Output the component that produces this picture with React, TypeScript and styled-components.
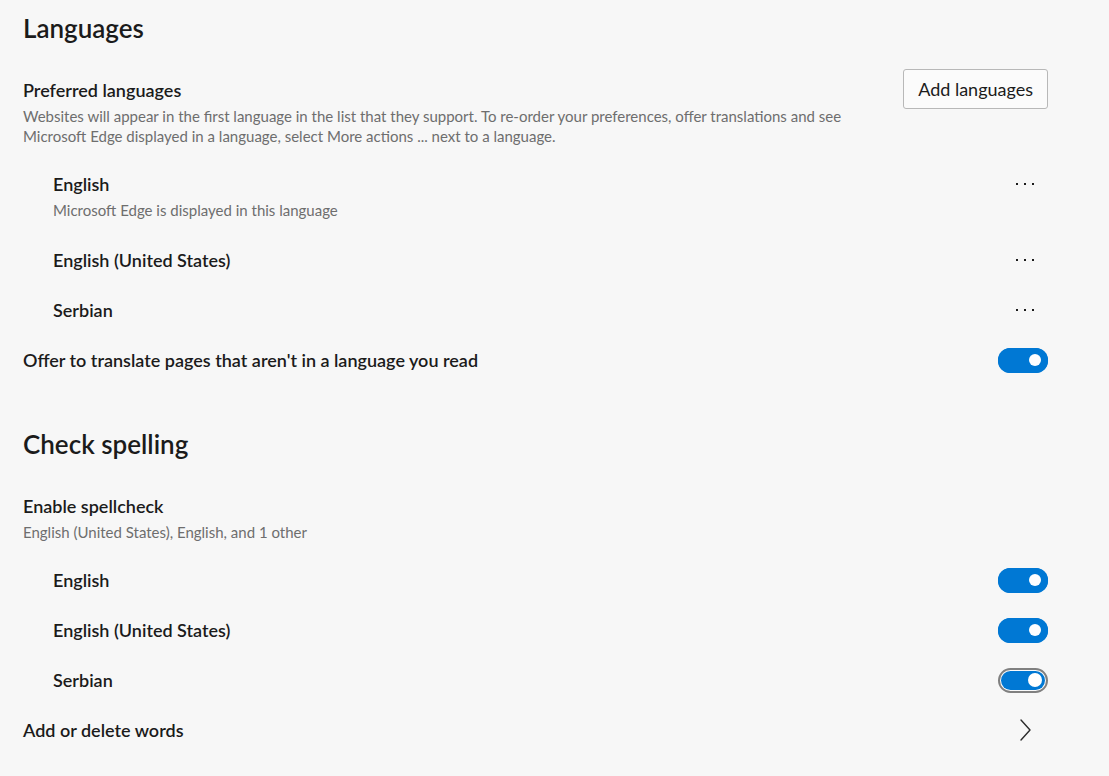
import styled, { createGlobalStyle } from "styled-components";

const GlobalStyle = createGlobalStyle`
  html, body {
    margin: 0;
    padding: 0;
    background: #f7f7f7;
  }
  body {
    font-family: "Segoe UI", Lato, "Noto Sans", sans-serif;
    color: #1b1b1b;
  }
`;

const Page = styled.main`
  width: 1109px;
  min-height: 776px;
  box-sizing: border-box;
  padding: 10px 61px 0 23px;
`;

const Section = styled.section`
  display: flex;
  flex-direction: column;
  & + & {
    margin-top: 41px;
  }
`;

const SectionTitle = styled.h2`
  margin: 0 0 23px;
  font-size: 26px;
  line-height: 36px;
  font-weight: 600;
`;

const HeaderRow = styled.div`
  display: flex;
  justify-content: space-between;
  align-items: flex-start;
`;

const HeaderText = styled.div`
  padding-top: 9px;
  max-width: 850px;
`;

const Label = styled.div`
  font-size: 18px;
  line-height: 24px;
  font-weight: 600;
`;

const Description = styled.div`
  margin-top: 4px;
  font-size: 15px;
  line-height: 20px;
  color: #6e6e6e;
`;

const Button = styled.button`
  height: 40px;
  padding: 0 14px;
  border: 1px solid #b8b8b8;
  border-radius: 3px;
  background: #fbfbfb;
  color: #1b1b1b;
  font-family: inherit;
  font-size: 18px;
  cursor: pointer;
`;

const List = styled.div<{ $gap: number }>`
  display: flex;
  flex-direction: column;
  margin-top: ${(p) => p.$gap}px;
`;

const Row = styled.div<{ $indent?: boolean; $tall?: boolean }>`
  display: flex;
  align-items: center;
  justify-content: space-between;
  min-height: 50px;
  padding-left: ${(p) => (p.$indent ? 30 : 0)}px;
  ${(p) =>
    p.$tall &&
    `
    align-items: flex-start;
    padding-top: 12px;
    padding-bottom: 13px;
  `}
`;

const IconButton = styled.button`
  display: flex;
  align-items: center;
  justify-content: center;
  width: 32px;
  height: 24px;
  margin-right: 7px;
  padding: 0;
  border: none;
  background: none;
  color: #1b1b1b;
  cursor: pointer;
`;

const Toggle = styled.button<{ $focus?: boolean }>`
  position: relative;
  box-sizing: border-box;
  width: 50px;
  height: 25px;
  padding: 0;
  border-radius: 13px;
  border: ${(p) => (p.$focus ? "2px solid #808080" : "none")};
  background: ${(p) => (p.$focus ? "#fafafa" : "#0078d4")};
  cursor: pointer;
  &::before {
    content: "";
    position: absolute;
    inset: ${(p) => (p.$focus ? "1px" : "0")};
    border-radius: 12px;
    background: #0078d4;
  }
  &::after {
    content: "";
    position: absolute;
    top: 50%;
    right: ${(p) => (p.$focus ? 4 : 7)}px;
    width: ${(p) => (p.$focus ? 14 : 12)}px;
    height: ${(p) => (p.$focus ? 14 : 12)}px;
    margin-top: ${(p) => (p.$focus ? -7 : -6)}px;
    border-radius: 50%;
    background: #fff;
  }
`;

const Dots = () => (
  <svg width="20" height="4" viewBox="0 0 20 4" fill="currentColor">
    <rect x="1" y="1" width="2" height="2" />
    <rect x="9" y="1" width="2" height="2" />
    <rect x="17" y="1" width="2" height="2" />
  </svg>
);

const Chevron = () => (
  <svg width="20" height="24" viewBox="0 0 20 24" fill="none">
    <polyline
      points="6,2 15,12 6,22"
      stroke="#2b2b2b"
      strokeWidth="1.4"
      strokeLinecap="round"
      strokeLinejoin="round"
    />
  </svg>
);

const languages = ["English (United States)", "Serbian"];
const spell = [
  { name: "English", focus: false },
  { name: "English (United States)", focus: false },
  { name: "Serbian", focus: true },
];

export default function App() {
  return (
    <>
      <GlobalStyle />
      <Page>
        <Section>
          <SectionTitle>Languages</SectionTitle>
          <HeaderRow>
            <HeaderText>
              <Label>Preferred languages</Label>
              <Description>
                Websites will appear in the first language in the list that they support. To
                re-order your preferences, offer translations and see Microsoft Edge displayed in
                a language, select More actions ... next to a language.
              </Description>
            </HeaderText>
            <Button>Add languages</Button>
          </HeaderRow>
          <List $gap={14}>
            <Row $indent $tall>
              <div>
                <Label>English</Label>
                <Description>Microsoft Edge is displayed in this language</Description>
              </div>
              <IconButton aria-label="More actions">
                <Dots />
              </IconButton>
            </Row>
            {languages.map((l) => (
              <Row $indent key={l}>
                <Label>{l}</Label>
                <IconButton aria-label="More actions">
                  <Dots />
                </IconButton>
              </Row>
            ))}
            <Row>
              <Label>Offer to translate pages that aren't in a language you read</Label>
              <Toggle aria-label="Offer to translate" />
            </Row>
          </List>
        </Section>

        <Section>
          <SectionTitle>Check spelling</SectionTitle>
          <HeaderRow>
            <HeaderText>
              <Label>Enable spellcheck</Label>
              <Description>English (United States), English, and 1 other</Description>
            </HeaderText>
          </HeaderRow>
          <List $gap={13}>
            {spell.map((s) => (
              <Row $indent key={s.name}>
                <Label>{s.name}</Label>
                <Toggle $focus={s.focus} aria-label={s.name} />
              </Row>
            ))}
            <Row>
              <Label>Add or delete words</Label>
              <IconButton aria-label="Open">
                <Chevron />
              </IconButton>
            </Row>
          </List>
        </Section>
      </Page>
    </>
  );
}
